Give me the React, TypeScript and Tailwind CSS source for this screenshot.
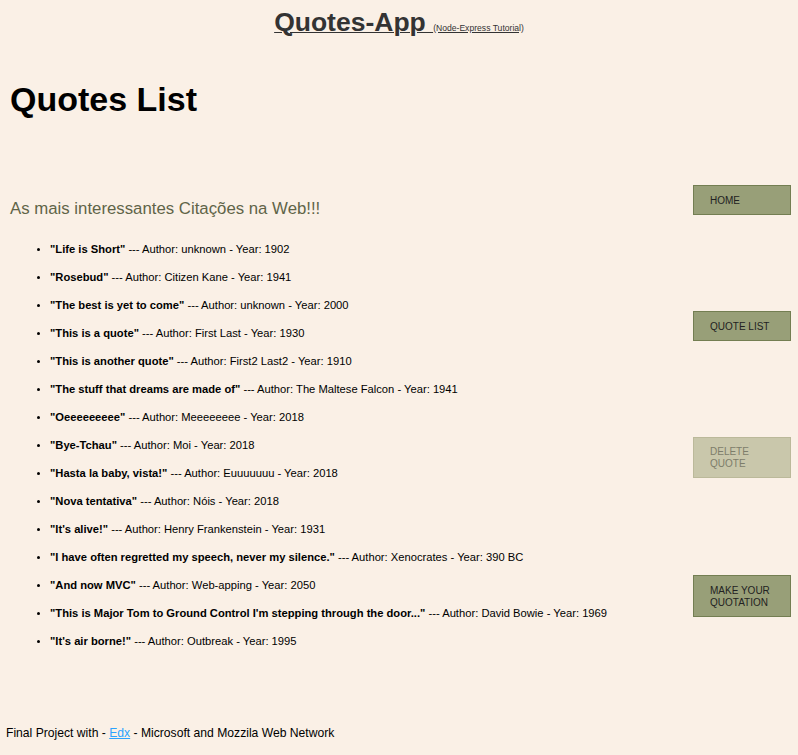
import React from "react";

const quotes: [string, string, string][] = [
  ["Life is Short", "unknown", "1902"],
  ["Rosebud", "Citizen Kane", "1941"],
  ["The best is yet to come", "unknown", "2000"],
  ["This is a quote", "First Last", "1930"],
  ["This is another quote", "First2 Last2", "1910"],
  ["The stuff that dreams are made of", "The Maltese Falcon", "1941"],
  ["Oeeeeeeeee", "Meeeeeeee", "2018"],
  ["Bye-Tchau", "Moi", "2018"],
  ["Hasta la baby, vista!", "Euuuuuuu", "2018"],
  ["Nova tentativa", "Nóis", "2018"],
  ["It's alive!", "Henry Frankenstein", "1931"],
  ["I have often regretted my speech, never my silence.", "Xenocrates", "390 BC"],
  ["And now MVC", "Web-apping", "2050"],
  ["This is Major Tom to Ground Control I'm stepping through the door...", "David Bowie", "1969"],
  ["It's air borne!", "Outbreak", "1995"],
];

export default function App() {
  return (
    <div
      className="min-h-[755px] bg-[#faf0e6] text-black relative"
      style={{ fontFamily: '"Liberation Sans", Arial, sans-serif' }}
    >
      <div className="text-center pt-[5px] h-[40px]">
        <a className="underline text-[#333] decoration-[#333]">
          <span className="text-[26.5px] font-bold leading-[34px]">Quotes-App </span>
          <span className="text-[8.6px] leading-none">(Node-Express Tutorial)</span>
        </a>
      </div>
      <div className="flex">
        <div className="flex-1 pl-[10px]">
          <h1 className="text-[34px] font-bold leading-[41px] mt-[39px]">Quotes List</h1>
          <h3 className="text-[16.8px] text-[#5f6448] leading-[20px] mt-[79px]">
            As mais interessantes Citações na Web!!!
          </h3>
          <ul className="list-disc pl-[40px] mt-[23px] text-[11.2px] leading-[14px]">
            {quotes.map(([q, a, y], i) => (
              <li key={i} className="mb-[14px] marker:text-[10px]">
                <b>"{q}"</b> --- Author: {a} - Year: {y}
              </li>
            ))}
          </ul>
        </div>
        <div className="w-[105px] pt-[145px] flex flex-col text-[10px] leading-[12px]">
          <div className="w-[98px] h-[30px] bg-[#989f78] border border-[#737e52] pl-[16px] pt-[1px] flex items-center text-[#222]">
            HOME
          </div>
          <div className="w-[98px] h-[30px] mt-[96px] bg-[#989f78] border border-[#737e52] pl-[16px] pt-[1px] flex items-center text-[#222]">
            QUOTE LIST
          </div>
          <div className="w-[98px] h-[41px] mt-[96px] bg-[#c9c7ab] border border-[#bbb99a] pl-[16px] pt-[1px] flex items-center text-[#7d7d6a]">
            DELETE
            <br />
            QUOTE
          </div>
          <div className="w-[98px] h-[42px] mt-[97px] bg-[#989f78] border border-[#737e52] pl-[16px] pt-[1px] flex items-center text-[#222]">
            MAKE YOUR
            <br />
            QUOTATION
          </div>
        </div>
      </div>
      <div className="absolute left-[6px] top-[726px] text-[12.15px] leading-[14px]">
        Final Project with - <a className="text-[#2aa3ff] underline">Edx</a> - Microsoft and Mozzila Web Network
      </div>
    </div>
  );
}
